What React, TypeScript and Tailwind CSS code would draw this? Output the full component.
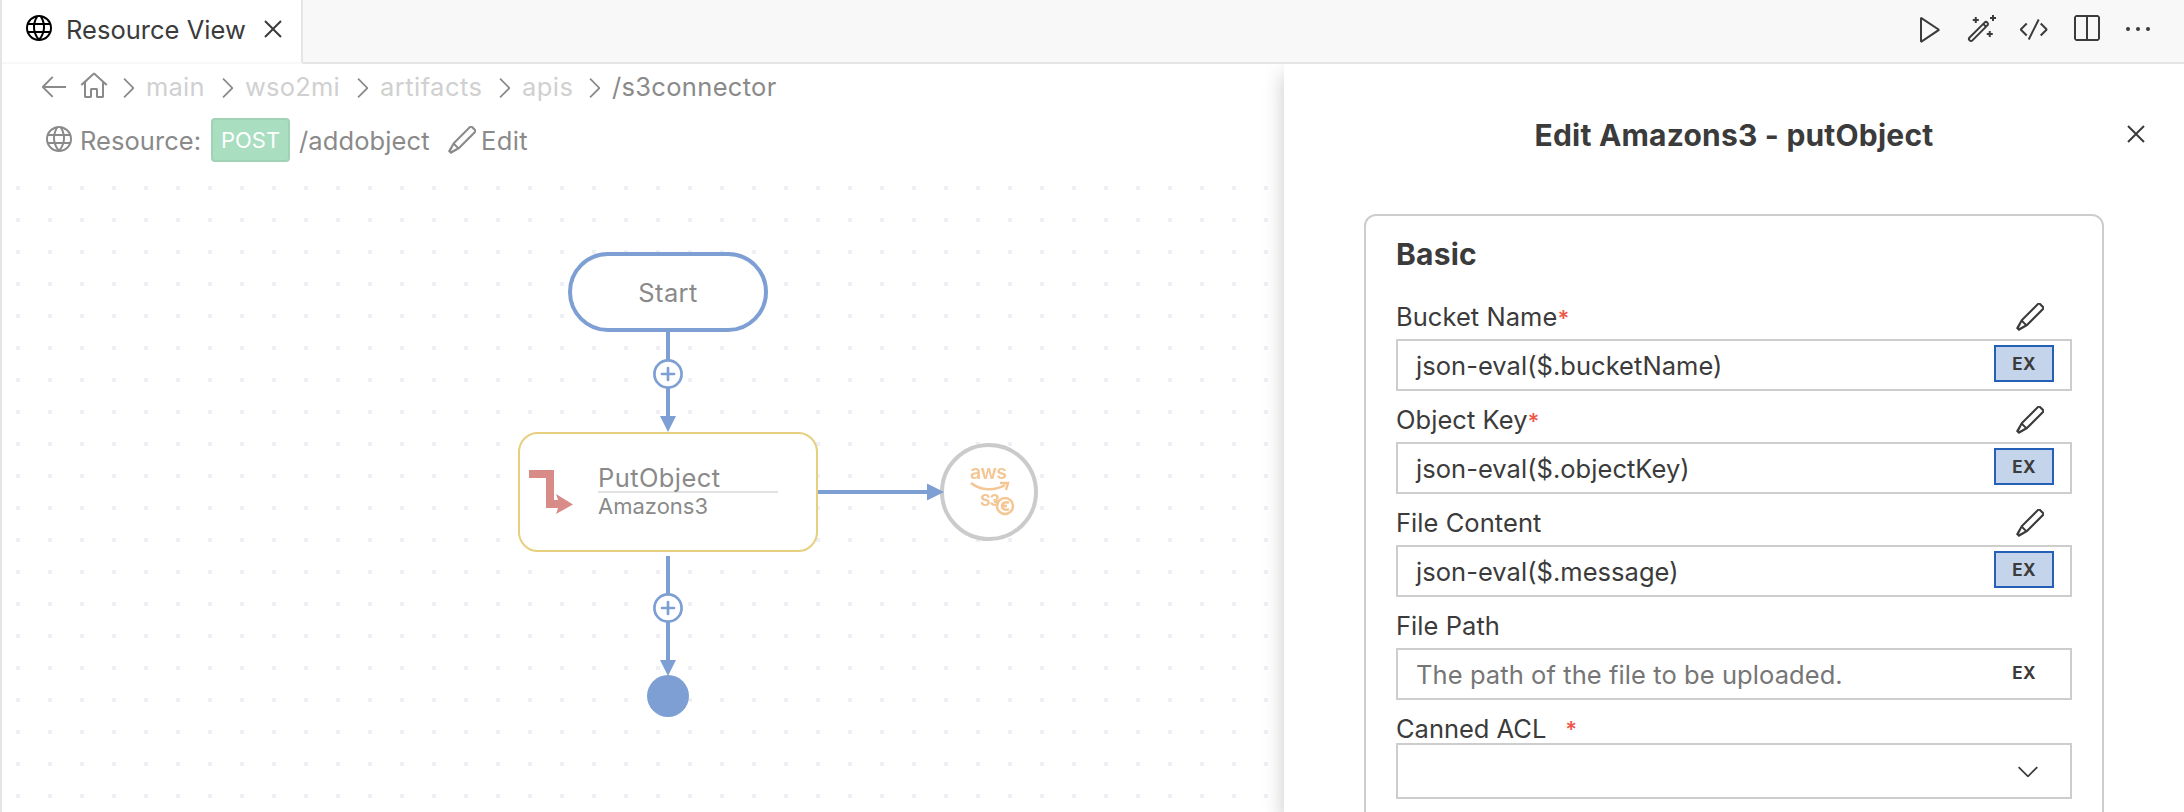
import type { ReactNode } from "react";
import {
  VscArrowLeft,
  VscChevronDown,
  VscChevronRight,
  VscClose,
  VscCode,
  VscEdit,
  VscEllipsis,
  VscGlobe,
  VscHome,
  VscPlay,
  VscSplitHorizontal,
  VscWand,
} from "react-icons/vsc";

function TabBar() {
  return (
    <header className="flex h-16 shrink-0 bg-[#f8f8f8]">
      <div className="flex w-[301px] shrink-0 items-center border-r-2 border-b-2 border-r-[#e5e5e5] border-b-[#f8f8f8] bg-white pb-1 pl-5">
        <VscGlobe className="size-8 shrink-0 text-black" />
        <span className="ml-3 w-[191px] whitespace-nowrap pt-[3px] tracking-[0.02px]">Resource View</span>
        <VscClose className="size-8 shrink-0" />
      </div>
      <div className="flex flex-1 items-center justify-end gap-5 border-b-2 border-[#e5e5e5] pr-[30px] pb-1">
        <VscPlay className="size-8" />
        <VscWand className="size-8" />
        <VscCode className="size-8" />
        <VscSplitHorizontal className="size-8" />
        <VscEllipsis className="size-8" />
      </div>
    </header>
  );
}

function Crumb({ className, children }: { className: string; children: ReactNode }) {
  return (
    <div className={`flex items-center whitespace-nowrap ${className}`}>
      <VscChevronRight className="mt-0.5 size-8 shrink-0 text-[#8a8a8a]" />
      {children}
    </div>
  );
}

function Breadcrumbs() {
  return (
    <nav className="flex h-[46px] items-center pl-9 text-[#d0d0d0]">
      <VscArrowLeft className="mb-0.5 size-8 text-[#8a8a8a]" />
      <VscHome className="mr-0.5 mb-0.5 ml-2 size-8 text-[#8a8a8a]" />
      <Crumb className="w-[99px]">
        <span className="ml-0.5 pt-px tracking-[0.2px]">main</span>
      </Crumb>
      <Crumb className="w-[135px]">
        <span className="ml-0.5 pt-px tracking-[0.2px]">wso2mi</span>
      </Crumb>
      <Crumb className="w-[142px]">
        <span className="ml-0.5 pt-px tracking-[0.45px]">artifacts</span>
      </Crumb>
      <Crumb className="w-[90px]">
        <span className="ml-0.5 pt-px tracking-[0.45px]">apis</span>
      </Crumb>
      <Crumb className="">
        <span className="ml-0.5 pt-px tracking-[0.32px] text-[#8a8a8a]">/s3connector</span>
      </Crumb>
    </nav>
  );
}

function ResourceBar() {
  return (
    <div className="flex h-[60px] items-center pl-10 whitespace-nowrap text-[#8a8a8a]">
      <VscGlobe className="size-8" />
      <span className="ml-1.5 w-[131px] pt-[3px] tracking-[0.05px]">Resource:</span>
      <span className="flex h-11 w-[79px] items-center justify-center rounded-[4px] border-2 border-[#a0d3b5] bg-[#a9dec0] pt-px text-[22px] text-white">
        POST
      </span>
      <span className="ml-[9px] w-[147px] pt-[3px] tracking-[0.1px]">/addobject</span>
      <VscEdit className="size-8" />
      <span className="ml-[3px] pt-[3px] tracking-[0.4px]">Edit</span>
    </div>
  );
}

function Connector({ x1, y1, x2, y2 }: { x1: number; y1: number; x2: number; y2: number }) {
  const vertical = x1 === x2;
  return (
    <g>
      <line x1={x1} y1={y1} x2={vertical ? x2 : x2 - 14} y2={vertical ? y2 - 14 : y2} strokeWidth="4" />
      <path
        d={
          vertical
            ? `M${x2 - 8} ${y2 - 16}h16l-8 16z`
            : `M${x2 - 17} ${y2 - 8.5}v17l17-8.5z`
        }
        stroke="none"
        fill="#7d9fd3"
      />
    </g>
  );
}

function AddButton({ cy }: { cy: number }) {
  return (
    <g>
      <circle cx="666" cy={cy} r="13.6" strokeWidth="2.7" fill="#fff" />
      <path d={`M660 ${cy}h12M666 ${cy - 6}v12`} strokeWidth="2.7" strokeLinecap="round" />
    </g>
  );
}

function Diagram() {
  return (
    <div className="relative flex-1 bg-[conic-gradient(at_4px_4px,transparent_75%,#edf1f5_0)] bg-[length:32px_32px] bg-[position:14px_16px] text-[#8a8a8a]">
      <svg className="absolute top-0 left-0" width="1282" height="642" fill="none" stroke="#7d9fd3">
        <Connector x1={666} y1={162} x2={666} y2={262} />
        <AddButton cy={204} />
        <Connector x1={666} y1={386} x2={666} y2={506} />
        <AddButton cy={438} />
        <circle cx="666" cy="526" r="21" fill="#7d9fd3" stroke="none" />
      </svg>
      <div className="absolute top-[82px] left-[566px] flex h-20 w-[200px] items-center justify-center rounded-[40px] border-4 border-[#7d9fd3] bg-white pt-0.5 tracking-[0.4px]">
        Start
      </div>
      <div className="absolute top-[262px] left-[516px] flex h-[120px] w-[300px] rounded-[20px] border-2 border-[#e6cf7d] bg-white">
        <svg className="mt-9 ml-[9px]" width="44" height="46" fill="#d98c87">
          <path d="M0 0h25v30h4l-2-6 17 10.500-17 9.500 2-6H17V8H0z" />
        </svg>
        <div className="ml-[25px] w-[180px] pt-[30px]">
          <div className="h-[29px] border-b-2 border-[#e2e2e2] leading-[27px] tracking-[0.4px]">PutObject</div>
          <div className="text-[22px] leading-[26px]">Amazons3</div>
        </div>
      </div>
      <div className="absolute top-[273px] left-[938px] size-[98px] rounded-full border-4 border-[#cbcbcb] bg-white">
        <div className="absolute top-[13px] left-[26px] text-[19.500px] leading-[24px] font-semibold tracking-[-0.6px] text-[#f4c694] blur-[0.6px]">aws</div>
        <div className="absolute top-[43px] left-[36px] text-[16px] leading-[20px] font-bold tracking-[-1px] text-[#f4c694] blur-[0.6px]">S3</div>
        <svg className="absolute top-[34px] left-[25px] blur-[0.5px]" width="48" height="40" fill="none" stroke="#f4c694" strokeWidth="2.500">
          <path d="M2 2C12 10 26 10 36 4M31 2h8l-2 7" />
          <circle cx="36" cy="25" r="8" />
          <path d="M29 21h-4M40 22c-3-2-7 0-7 3s4 5 7 3M33 25h5" />
        </svg>
      </div>
      <svg className="absolute top-[300px] left-0" width="960" height="44" fill="none" stroke="#7d9fd3">
        <Connector x1={816} y1={22} x2={942} y2={22} />
      </svg>
    </div>
  );
}

function ExButton({ active }: { active: boolean }) {
  return (
    <button
      className={`mt-1 mr-4 flex h-[37px] w-[60px] items-center justify-center self-start border-2 pt-0.5 text-[17px] font-bold tracking-[0.3px] ${
        active ? "border-[#2460b8] bg-[#c4d4ea]" : "border-transparent"
      }`}
    >
      EX
    </button>
  );
}

function RequiredMark() {
  return <span className="text-[22px] leading-none font-semibold text-[#f0574a]">*</span>;
}

interface FieldProps {
  label: string;
  value?: string;
  placeholder?: string;
  required?: boolean;
  expression?: boolean;
}

function Field({ label, value, placeholder, required = false, expression = false }: FieldProps) {
  return (
    <div>
      <div className="flex h-[51px] items-center justify-between pt-[7px] pr-[26px]">
        <span className="tracking-[0.05px]">
          {label}
          {required && <RequiredMark />}
        </span>
        {expression && <VscEdit className="size-8" />}
      </div>
      <div className="flex h-[52px] items-center justify-between border-2 border-[#cdcdcd] pl-[18px]">
        {value ? (
          <span className="pt-[3px] tracking-[0.04px]">{value}</span>
        ) : (
          <span className="pt-[3px] tracking-[0.08px] text-[#767676]">{placeholder}</span>
        )}
        <ExButton active={expression} />
      </div>
    </div>
  );
}

function SidePanel() {
  return (
    <aside className="relative z-10 flex w-[900px] shrink-0 flex-col bg-white shadow-[0_10px_20px_#c8c8c8]">
      <div className="flex h-[142px] shrink-0 items-center pr-8 pl-[33px]">
        <h2 className="flex-1 pl-[31px] text-center text-[30px] font-bold tracking-[0.2px]">Edit Amazons3 - putObject</h2>
        <VscClose className="mb-0.5 size-8" />
      </div>
      <section className="mt-2 ml-20 h-[640px] w-[740px] shrink-0 rounded-xl border-2 border-[#cdcdcd] px-[30px]">
        <h3 className="flex h-[72px] items-center pt-1 text-[30px] font-bold tracking-[0.2px]">Basic</h3>
        <Field label="Bucket Name" value="json-eval($.bucketName)" required expression />
        <Field label="Object Key" value="json-eval($.objectKey)" required expression />
        <Field label="File Content" value="json-eval($.message)" expression />
        <Field label="File Path" placeholder="The path of the file to be uploaded." />
        <div className="flex h-[43px] items-center gap-[19px] pt-[15px] tracking-[-0.02px]">
          Canned ACL
          <RequiredMark />
        </div>
        <div className="flex h-14 items-center justify-end border-2 border-[#cdcdcd] pr-[26px]">
          <VscChevronDown className="size-8" />
        </div>
      </section>
    </aside>
  );
}

export default function App() {
  return (
    <div className="flex h-[812px] w-[2184px] flex-col overflow-hidden border-l-2 border-[#e5e5e5] bg-white font-['Inter','Liberation_Sans',sans-serif] text-[25.5px] text-[#3b3b3b]">
      <TabBar />
      <div className="flex min-h-0 flex-1 overflow-hidden">
        <main className="flex min-w-0 flex-1 flex-col">
          <Breadcrumbs />
          <ResourceBar />
          <Diagram />
        </main>
        <SidePanel />
      </div>
    </div>
  );
}
